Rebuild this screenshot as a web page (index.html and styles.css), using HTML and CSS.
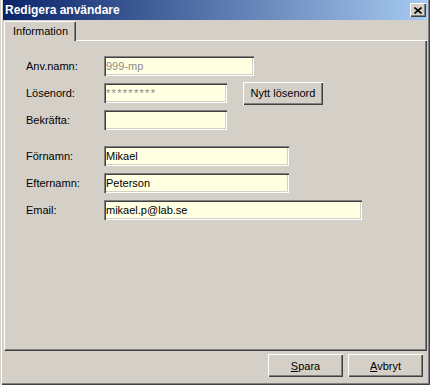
FILE: index.html
```html
<!DOCTYPE html>
<html>
<head>
<meta charset="utf-8">
<title>Redigera användare</title>
<link rel="stylesheet" href="styles.css">
</head>
<body>
<div class="window">
    <div class="titlebar">
        <span class="title">Redigera användare</span>
        <button class="close" type="button">
            <svg width="8" height="7" viewBox="0 0 8 7"><path d="M0.5 0.5 L7.5 6.5 M7.5 0.5 L0.5 6.5" stroke="#000" stroke-width="1.6" fill="none"/></svg>
        </button>
    </div>

    <div class="tabs">
        <div class="tab">Information</div>
        <div class="tab-rest"></div>
    </div>

    <div class="panel">
        <div class="group">
            <div class="row">
                <label>Anv.namn:</label>
                <input class="field w150" type="text" value="999-mp" disabled>
            </div>
            <div class="row">
                <label>Lösenord:</label>
                <input class="field w123 masked" type="text" value="*********" disabled>
                <button class="btn btn-pw" type="button">Nytt lösenord</button>
            </div>
            <div class="row">
                <label>Bekräfta:</label>
                <input class="field w123" type="text" value="">
            </div>
        </div>
        <div class="group">
            <div class="row">
                <label>Förnamn:</label>
                <input class="field w185" type="text" value="Mikael">
            </div>
            <div class="row">
                <label>Efternamn:</label>
                <input class="field w185" type="text" value="Peterson">
            </div>
            <div class="row">
                <label>Email:</label>
                <input class="field w258" type="text" value="mikael.p@lab.se">
            </div>
        </div>
    </div>

    <div class="footer">
        <button class="btn btn-action" type="button"><u>S</u>para</button>
        <button class="btn btn-action" type="button"><u>A</u>vbryt</button>
    </div>
</div>
</body>
</html>
```

FILE: styles.css
```css
/* classic dialog */
body {
    margin: 0;
    font-family: 'Liberation Sans', Arial, sans-serif;
    font-size: 11px;
    color: #000;
    background: #d4d0c8;
}

.window {
    box-sizing: border-box;
    width: 430px;
    height: 385px;
    display: flex;
    flex-direction: column;
    padding: 0 3px 2px 3px;
    background: #d4d0c8;
    box-shadow: inset 1px 0 #d4d0c8, inset 2px 0 #ffffff,
                inset -1px -1px #404040, inset -2px -2px #808080;
}

/* title bar */
.titlebar {
    height: 20px;
    flex: none;
    display: flex;
    align-items: center;
    justify-content: space-between;
    padding: 0 1px 0 2px;
    background: linear-gradient(to right, #0a246a, #a6caf0);
}

.title {
    color: #fff;
    font-weight: bold;
    font-size: 12px;
}

.close {
    width: 16px;
    height: 14px;
    padding: 0;
    border: none;
    background: #d4d0c8;
    display: flex;
    align-items: center;
    justify-content: center;
    box-shadow: inset 1px 1px #fff, inset -1px -1px #404040, inset -2px -2px #808080;
}

/* tabs */
.tabs {
    flex: none;
    display: flex;
    align-items: flex-end;
    height: 20px;
    margin-top: 1px;
    margin-left: 1px;
}

.tab {
    box-sizing: border-box;
    width: 72px;
    height: 20px;
    padding: 3px 0 0 8px;
    border-left: 1px solid #fff;
    border-top: 1px solid #fff;
    border-right: 1px solid #404040;
    box-shadow: inset -1px 0 #808080;
    border-top-right-radius: 2px;
    border-top-left-radius: 2px;
}

.tab-rest {
    flex: 1;
    height: 1px;
    background: #fff;
}

/* panel */
.panel {
    box-sizing: border-box;
    flex: none;
    width: 423px;
    height: 310px;
    margin-left: 1px;
    padding: 15px 0 0 21px;
    border-left: 1px solid #fff;
    border-right: 1px solid #404040;
    border-bottom: 1px solid #404040;
    box-shadow: inset -1px -1px #808080;
    display: flex;
    flex-direction: column;
    gap: 16px;
}

.group {
    display: flex;
    flex-direction: column;
    gap: 7px;
}

.row {
    display: flex;
    align-items: center;
    height: 20px;
}

.row label {
    width: 78px;
    flex: none;
}

.field {
    box-sizing: border-box;
    height: 20px;
    margin: 0;
    padding: 0 2px;
    font: inherit;
    color: #000;
    background: #ffffe1;
    border: none;
    box-shadow: inset 1px 1px #808080, inset 2px 2px #404040,
                inset -1px -1px #fff, inset -2px -2px #d4d0c8;
    outline: none;
}

.field:disabled {
    color: #8c8c8c;
    background: #ffffe1;
}

.masked {
    letter-spacing: 1.3px;
}

.w123 { width: 123px; }
.w150 { width: 150px; }
.w185 { width: 185px; }
.w258 { width: 258px; }

/* buttons */
.btn {
    box-sizing: border-box;
    height: 23px;
    padding: 0;
    font: inherit;
    color: #000;
    background: #d4d0c8;
    border: none;
    box-shadow: inset 1px 1px #fff, inset -1px -1px #404040, inset -2px -2px #808080;
}

.btn-pw {
    width: 80px;
    margin-left: 16px;
    flex: none;
}

.footer {
    flex: 1;
    display: flex;
    justify-content: flex-end;
    align-items: flex-start;
    gap: 5px;
    padding: 3px 4px 0 0;
}

.btn-action {
    width: 75px;
}

.btn-action u {
    text-decoration: underline;
}
```
